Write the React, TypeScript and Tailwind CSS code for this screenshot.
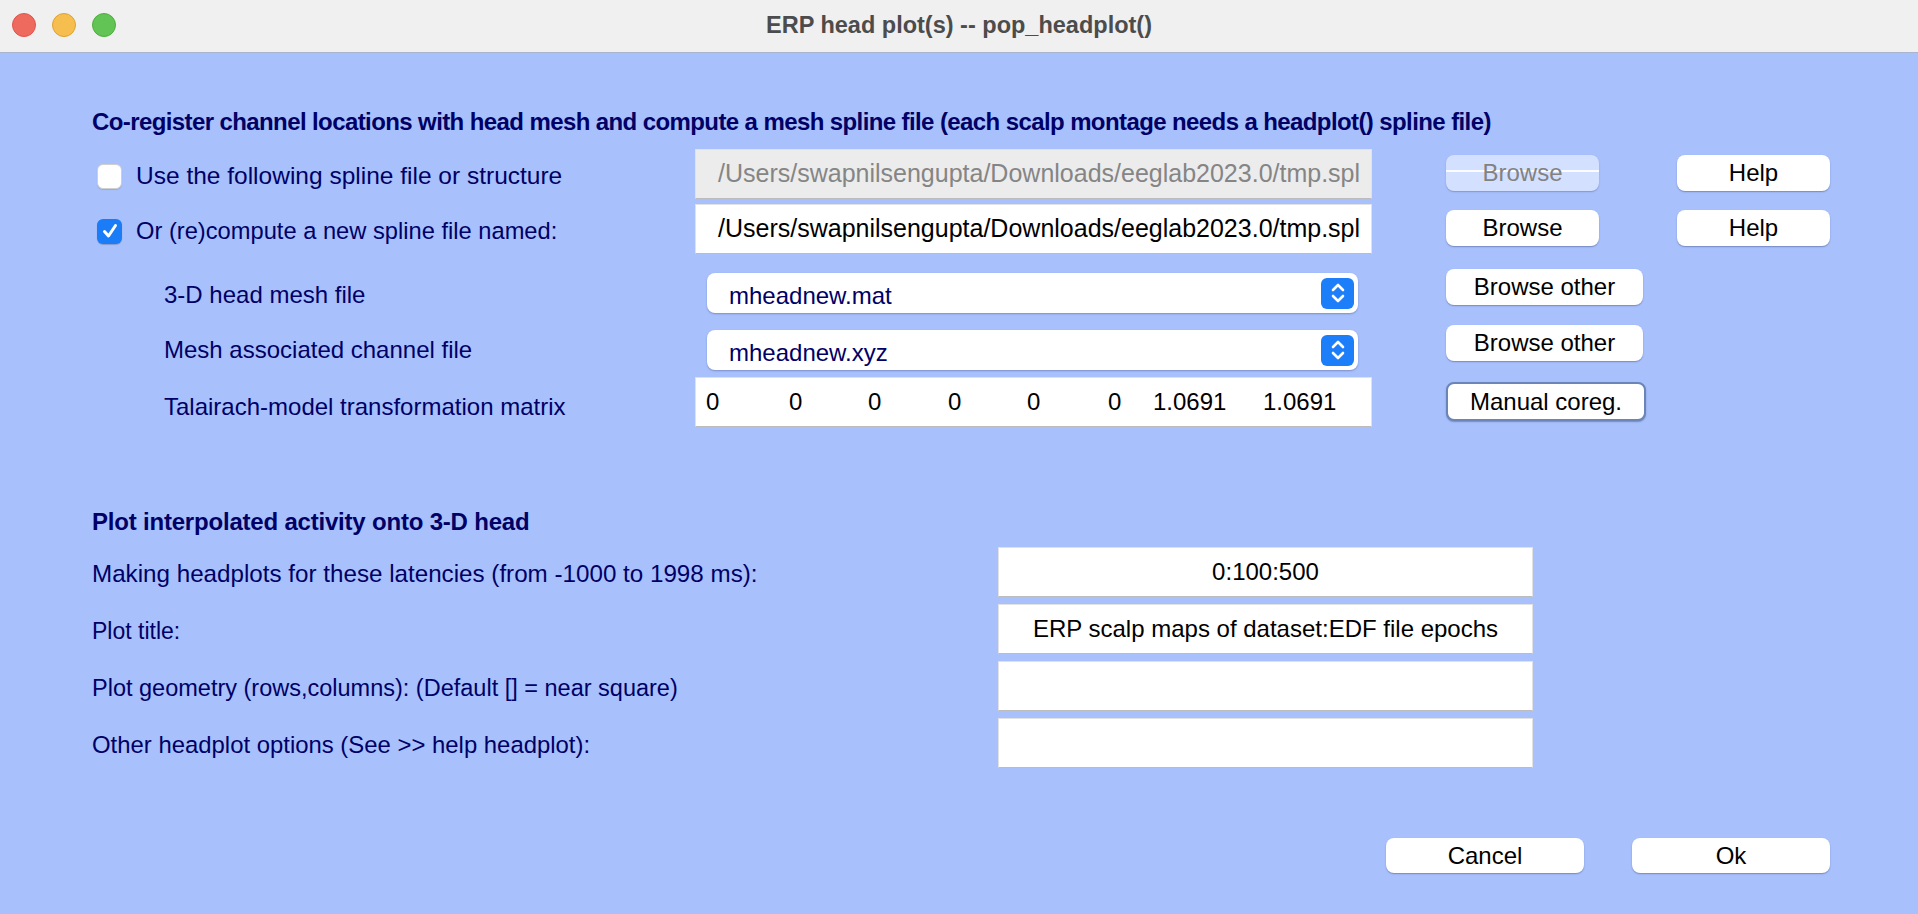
import React from "react";

const font = "font-['Liberation_Sans',Arial,sans-serif]";

function Btn({ label, w, h = 36, focused = false, disabled = false }: { label: string; w: number; h?: number; focused?: boolean; disabled?: boolean }) {
  if (disabled) {
    return (
      <div
        className="relative flex items-center justify-center rounded-[8px] bg-[#d4e0ff] text-[24px] text-[#828282] shadow-[0_1px_1.5px_rgba(60,70,120,0.35)]"
        style={{ width: w, height: h }}
      >
        <div className="absolute left-0 right-0 top-[15px] h-[2px] bg-white/90" />
        <span className="relative">{label}</span>
      </div>
    );
  }
  return (
    <div
      className={
        "flex items-center justify-center rounded-[8px] bg-white text-[24px] text-black shadow-[0_1px_1.5px_rgba(40,50,100,0.4)] " +
        (focused ? "border-2 border-[#6b86b6]" : "")
      }
      style={{ width: w, height: h }}
    >
      {label}
    </div>
  );
}

function Field({ value, w, disabled = false, center = false, big = false }: { value?: string; w: number; disabled?: boolean; center?: boolean; big?: boolean }) {
  return (
    <div
      className={
        "flex h-[50px] items-center border border-[#e2e2e2] border-b-[#bcbcbc] " +
        (big ? "text-[25px] " : "text-[24px] ") +
        (disabled ? "bg-[#ececec] text-[#858585] " : "bg-white text-black ") +
        (center ? "justify-center" : "pl-[22px]")
      }
      style={{ width: w }}
    >
      {value}
    </div>
  );
}

function Select({ value }: { value: string }) {
  return (
    <div className="flex h-[40px] w-[651px] items-center justify-between rounded-[8px] bg-white pl-[22px] pr-[4px] text-[24px] text-[#000066] shadow-[0_1px_2px_rgba(40,50,100,0.35)]">
      <span className="mt-[6px]">{value}</span>
      <div className="flex h-[31px] w-[33px] items-center justify-center rounded-[6px] bg-[#1c7ef8]">
        <svg width="16" height="24" viewBox="0 0 16 24" fill="none" stroke="white" strokeWidth="2.6" strokeLinecap="round" strokeLinejoin="round">
          <polyline points="3,9 8,4 13,9" />
          <polyline points="3,15 8,20 13,15" />
        </svg>
      </div>
    </div>
  );
}

function Check({ checked }: { checked: boolean }) {
  if (checked) {
    return (
      <div className="flex h-[25px] w-[25px] items-center justify-center rounded-[6px] bg-[#1a7cf7] shadow-[0_1px_1px_rgba(0,0,0,0.2)]">
        <svg width="18" height="18" viewBox="0 0 18 18" fill="none" stroke="white" strokeWidth="3" strokeLinecap="round" strokeLinejoin="round">
          <polyline points="3.5,9.5 7.5,14 14.5,3.5" />
        </svg>
      </div>
    );
  }
  return <div className="h-[25px] w-[25px] rounded-[6px] border border-[#cfcfcf] bg-white shadow-[0_1px_1px_rgba(0,0,0,0.12)]" />;
}

export default function App() {
  const matrix = [
    { v: "0", w: 83 },
    { v: "0", w: 79 },
    { v: "0", w: 80 },
    { v: "0", w: 79 },
    { v: "0", w: 81 },
    { v: "0", w: 45 },
    { v: "1.0691", w: 110 },
    { v: "1.0691", w: 80 },
  ];
  const lower = [
    { label: "Making headplots for these latencies (from -1000 to 1998 ms):", value: "0:100:500", size: "text-[24.2px]" },
    { label: "Plot title:", value: "ERP scalp maps of dataset:EDF file epochs", size: "text-[23px]" },
    { label: "Plot geometry (rows,columns): (Default [] = near square)", value: "", size: "text-[23.5px]" },
    { label: "Other headplot options (See >> help headplot):", value: "", size: "text-[23.9px]" },
  ];
  return (
    <div className={"flex h-[914px] w-[1918px] flex-col overflow-hidden " + font}>
      {/* Title bar */}
      <div className="relative flex h-[53px] shrink-0 items-center border-b border-[#a9b4cf] bg-[#f0f0f0]">
        <div className="absolute left-[12px] top-[13px] flex gap-[16px]">
          <div className="h-[24px] w-[24px] rounded-full border border-[#e0544c] bg-[#ee6a5f]" />
          <div className="h-[24px] w-[24px] rounded-full border border-[#dea236] bg-[#f5be4f]" />
          <div className="h-[24px] w-[24px] rounded-full border border-[#4fae3d] bg-[#61c454]" />
        </div>
        <div className="w-full text-center text-[23.5px] font-bold text-[#4c4c4c]">ERP head plot(s) -- pop_headplot()</div>
      </div>

      {/* Body */}
      <div className="flex flex-1 flex-col bg-[#a8c1fd] pl-[92px] pt-[55px] text-[24px] text-[#000066]">
        <div className="h-[28px] whitespace-nowrap text-[24px] font-bold leading-[28px] tracking-[-0.6px]">
          Co-register channel locations with head mesh and compute a mesh spline file (each scalp montage needs a headplot() spline file)
        </div>

        {/* Row 1 */}
        <div className="mt-[13px] flex h-[50px] items-start">
          <div className="flex w-[603px] items-center">
            <div className="ml-[5px] mt-[13px]"><Check checked={false} /></div>
            <div className="ml-[14px] mt-[13px] text-[24.5px] leading-[28px]">Use the following spline file or structure</div>
          </div>
          <Field value="/Users/swapnilsengupta/Downloads/eeglab2023.0/tmp.spl" w={677} disabled big />
          <div className="ml-[74px] mt-[6px]"><Btn label="Browse" w={153} disabled /></div>
          <div className="ml-[78px] mt-[6px]"><Btn label="Help" w={153} /></div>
        </div>

        {/* Row 2 */}
        <div className="mt-[5px] flex h-[50px] items-start">
          <div className="flex w-[603px] items-center">
            <div className="ml-[5px] mt-[13px]"><Check checked /></div>
            <div className="ml-[14px] mt-[13px] text-[23.7px] leading-[28px]">Or (re)compute a new spline file named:</div>
          </div>
          <Field value="/Users/swapnilsengupta/Downloads/eeglab2023.0/tmp.spl" w={677} big />
          <div className="ml-[74px] mt-[6px]"><Btn label="Browse" w={153} /></div>
          <div className="ml-[78px] mt-[6px]"><Btn label="Help" w={153} /></div>
        </div>

        {/* Row 3 */}
        <div className="mt-[15px] flex h-[45px] items-start">
          <div className="mt-[12px] w-[615px] pl-[72px] leading-[28px]">3-D head mesh file</div>
          <div className="mt-[4px]"><Select value="mheadnew.mat" /></div>
          <div className="ml-[88px]"><Btn label="Browse other" w={197} /></div>
        </div>

        {/* Row 4 */}
        <div className="mt-[11px] flex h-[46px] items-start">
          <div className="mt-[11px] w-[615px] pl-[72px] leading-[28px]">Mesh associated channel file</div>
          <div className="mt-[5px]"><Select value="mheadnew.xyz" /></div>
          <div className="ml-[88px]"><Btn label="Browse other" w={197} /></div>
        </div>

        {/* Row 5 */}
        <div className="mt-[6px] flex h-[50px] items-start">
          <div className="mt-[16px] w-[603px] pl-[72px] leading-[28px]">Talairach-model transformation matrix</div>
          <div className="flex h-[50px] w-[677px] items-center border border-[#e2e2e2] border-b-[#bcbcbc] bg-white pl-[10px] text-[24px] text-black">
            {matrix.map((m, i) => (
              <span key={i} className="shrink-0" style={{ width: m.w }}>
                {m.v}
              </span>
            ))}
          </div>
          <div className="ml-[74px] mt-[5px]"><Btn label="Manual coreg." w={200} h={39} focused /></div>
        </div>

        {/* Heading 2 */}
        <div className="mt-[81px] h-[28px] font-bold leading-[28px] tracking-[-0.2px]">Plot interpolated activity onto 3-D head</div>

        <div className="mt-[11px] flex flex-col gap-[7px]">
          {lower.map((r, i) => (
            <div key={i} className="flex h-[50px] items-start">
              <div className={"mt-[13px] w-[906px] leading-[28px] " + r.size}>{r.label}</div>
              <Field value={r.value} w={535} center />
            </div>
          ))}
        </div>

        <div className="mt-[70px] flex">
          <div className="ml-[1294px]"><Btn label="Cancel" w={198} h={35} /></div>
          <div className="ml-[48px]"><Btn label="Ok" w={198} h={35} /></div>
        </div>
      </div>
    </div>
  );
}
